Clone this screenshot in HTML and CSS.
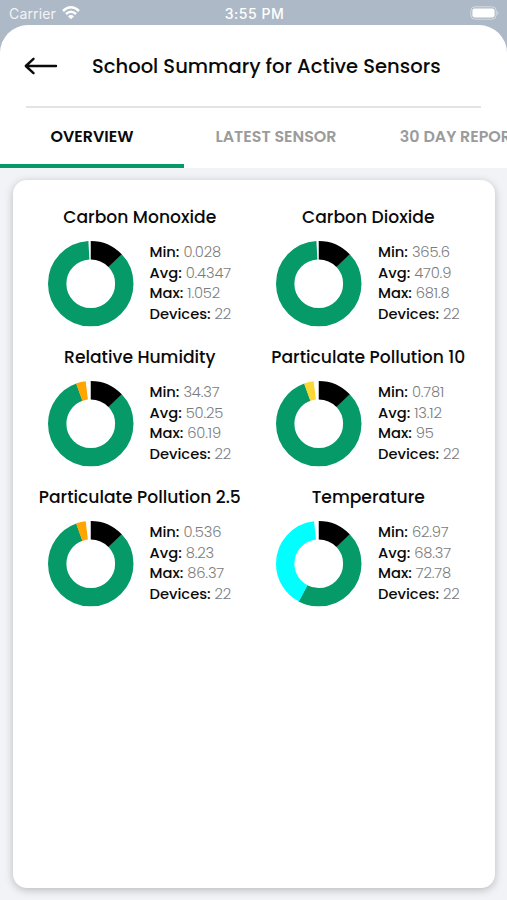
FILE: index.html
```html
<!DOCTYPE html>
<html lang="en">

<head>
    <meta charset="UTF-8">
    <meta name="viewport" content="width=device-width, initial-scale=1.0">
    <title>School Summary</title>
    <link rel="stylesheet" href="styles.css">
</head>

<body>
    <div class="status">
        <div class="carrier">
            <span>Carrier</span>
            <svg class="wifi" viewBox="0 0 18 14">
                <path d="M1 5 Q9 -2.4 17 5" />
                <path d="M3.9 8 Q9 3.4 14.1 8" />
                <path class="dot" d="M9 13.2 L5.9 10.2 Q9 7.6 12.1 10.2 Z" />
            </svg>
        </div>
        <div class="time">3:55 PM</div>
        <div class="power">
            <svg class="battery" viewBox="0 0 30 14">
                <rect class="shell" x="0.8" y="0.8" width="25.4" height="12.4" rx="4" />
                <rect class="level" x="2.4" y="2.4" width="22.2" height="9.2" rx="2.4" />
                <path class="cap" d="M27.4 4.8 Q29.6 7 27.4 9.2 Z" />
            </svg>
        </div>
    </div>
    <div class="sheet">
        <div class="header">
            <svg class="back" viewBox="0 0 34 20">
                <path d="M32 10 H2 M9.5 2.8 L1.8 10 L9.5 17.2" />
            </svg>
            <h1>School Summary for Active Sensors</h1>
        </div>
        <div class="tabs">
            <div class="tab active"><span>OVERVIEW</span></div>
            <div class="tab"><span>LATEST SENSOR</span></div>
            <div class="tab"><span>30 DAY REPORT</span></div>
        </div>
    </div>
    <div class="content">
        <div class="card">
            <div class="sensor">
                <h2>Carbon Monoxide</h2>
                <div class="row">
                    <svg class="donut" viewBox="0 0 86 86">
                        <circle class="green" pathLength="100" stroke-dasharray="86.3 100" stroke-dashoffset="-12.8" cx="43" cy="43" r="33.75" />
                        <circle class="black" pathLength="100" stroke-dasharray="12.9 100" cx="43" cy="43" r="33.75" />
                    </svg>
                    <ul>
                        <li><b>Min:</b> <span>0.028</span></li>
                        <li><b>Avg:</b> <span>0.4347</span></li>
                        <li><b>Max:</b> <span>1.052</span></li>
                        <li><b>Devices:</b> <span>22</span></li>
                    </ul>
                </div>
            </div>
            <div class="sensor">
                <h2>Carbon Dioxide</h2>
                <div class="row">
                    <svg class="donut" viewBox="0 0 86 86">
                        <circle class="green" pathLength="100" stroke-dasharray="86.3 100" stroke-dashoffset="-12.8" cx="43" cy="43" r="33.75" />
                        <circle class="black" pathLength="100" stroke-dasharray="12.9 100" cx="43" cy="43" r="33.75" />
                    </svg>
                    <ul>
                        <li><b>Min:</b> <span>365.6</span></li>
                        <li><b>Avg:</b> <span>470.9</span></li>
                        <li><b>Max:</b> <span>681.8</span></li>
                        <li><b>Devices:</b> <span>22</span></li>
                    </ul>
                </div>
            </div>
            <div class="sensor">
                <h2>Relative Humidity</h2>
                <div class="row">
                    <svg class="donut" viewBox="0 0 86 86">
                        <circle class="green" pathLength="100" stroke-dasharray="81.7 100" stroke-dashoffset="-12.8" cx="43" cy="43" r="33.75" />
                        <circle class="orange" pathLength="100" stroke-dasharray="3.7 100" stroke-dashoffset="-94.4" cx="43" cy="43" r="33.75" />
                        <circle class="black" pathLength="100" stroke-dasharray="12.9 100" cx="43" cy="43" r="33.75" />
                    </svg>
                    <ul>
                        <li><b>Min:</b> <span>34.37</span></li>
                        <li><b>Avg:</b> <span>50.25</span></li>
                        <li><b>Max:</b> <span>60.19</span></li>
                        <li><b>Devices:</b> <span>22</span></li>
                    </ul>
                </div>
            </div>
            <div class="sensor">
                <h2>Particulate Pollution 10</h2>
                <div class="row">
                    <svg class="donut" viewBox="0 0 86 86">
                        <circle class="green" pathLength="100" stroke-dasharray="81.7 100" stroke-dashoffset="-12.8" cx="43" cy="43" r="33.75" />
                        <circle class="yellow" pathLength="100" stroke-dasharray="3.7 100" stroke-dashoffset="-94.4" cx="43" cy="43" r="33.75" />
                        <circle class="black" pathLength="100" stroke-dasharray="12.9 100" cx="43" cy="43" r="33.75" />
                    </svg>
                    <ul>
                        <li><b>Min:</b> <span>0.781</span></li>
                        <li><b>Avg:</b> <span>13.12</span></li>
                        <li><b>Max:</b> <span>95</span></li>
                        <li><b>Devices:</b> <span>22</span></li>
                    </ul>
                </div>
            </div>
            <div class="sensor">
                <h2>Particulate Pollution 2.5</h2>
                <div class="row">
                    <svg class="donut" viewBox="0 0 86 86">
                        <circle class="green" pathLength="100" stroke-dasharray="81.7 100" stroke-dashoffset="-12.8" cx="43" cy="43" r="33.75" />
                        <circle class="orange" pathLength="100" stroke-dasharray="3.7 100" stroke-dashoffset="-94.4" cx="43" cy="43" r="33.75" />
                        <circle class="black" pathLength="100" stroke-dasharray="12.9 100" cx="43" cy="43" r="33.75" />
                    </svg>
                    <ul>
                        <li><b>Min:</b> <span>0.536</span></li>
                        <li><b>Avg:</b> <span>8.23</span></li>
                        <li><b>Max:</b> <span>86.37</span></li>
                        <li><b>Devices:</b> <span>22</span></li>
                    </ul>
                </div>
            </div>
            <div class="sensor">
                <h2>Temperature</h2>
                <div class="row">
                    <svg class="donut" viewBox="0 0 86 86">
                        <circle class="green" pathLength="100" stroke-dasharray="45 100" stroke-dashoffset="-12.8" cx="43" cy="43" r="33.75" />
                        <circle class="cyan" pathLength="100" stroke-dasharray="40.5 100" stroke-dashoffset="-57.7" cx="43" cy="43" r="33.75" />
                        <circle class="black" pathLength="100" stroke-dasharray="12.9 100" cx="43" cy="43" r="33.75" />
                    </svg>
                    <ul>
                        <li><b>Min:</b> <span>62.97</span></li>
                        <li><b>Avg:</b> <span>68.37</span></li>
                        <li><b>Max:</b> <span>72.78</span></li>
                        <li><b>Devices:</b> <span>22</span></li>
                    </ul>
                </div>
            </div>
        </div>
    </div>
</body>

</html>
```
FILE: styles.css
```css
* {
    margin: 0;
    padding: 0;
    box-sizing: border-box;
}

body {
    width: 100%;
    height: 100vh;
    display: flex;
    flex-direction: column;
    overflow: hidden;
    background: linear-gradient(#adb9c7 0, #adb9c7 80px, #f2f3f7 80px);
    font-family: Poppins, Inter, sans-serif;
    color: #0a0a0a;
}

/* status bar */
.status {
    height: 25px;
    padding: 1px 7px 0 9px;
    display: flex;
    align-items: center;
    color: white;
    font-family: Inter, sans-serif;
    font-size: 14px;
}

.carrier,
.power {
    flex: 1;
    display: flex;
    align-items: center;
    gap: 6px;
}

.carrier span {
    letter-spacing: 0.15px;
    opacity: 0.85;
}

.power {
    justify-content: flex-end;
}

.time {
    font-weight: 500;
    letter-spacing: 0.5px;
}

.wifi {
    width: 18px;
    height: 14px;
    fill: none;
    stroke: white;
    stroke-width: 2.4;
}

.wifi .dot {
    fill: white;
    stroke: none;
}

.battery {
    width: 30px;
    height: 14px;
}

.shell {
    fill: none;
    stroke: #d3dae2;
}

.level {
    fill: white;
}

.cap {
    fill: #d3dae2;
}

/* header + tabs */
.sheet {
    height: 143px;
    background-color: white;
    border-radius: 28px 28px 0 0;
}

.header {
    height: 83px;
    margin: 0 26px;
    border-bottom: 2px solid #e3e3e3;
    display: flex;
    align-items: center;
}

.back {
    width: 34px;
    height: 20px;
    margin-left: -2px;
    fill: none;
    stroke: #0a0a0a;
    stroke-width: 2.4;
    stroke-linecap: round;
    stroke-linejoin: round;
}

.header h1 {
    margin-left: 34px;
    font-size: 19.55px;
    font-weight: 500;
    white-space: nowrap;
}

.tabs {
    height: 60px;
    display: flex;
    overflow: hidden;
}

.tab {
    width: 184px;
    flex-shrink: 0;
    display: flex;
    align-items: center;
    justify-content: center;
    border-bottom: 4px solid transparent;
    font-size: 15.9px;
    font-weight: 600;
    color: #9b9b9b;
    white-space: nowrap;
}

.tab.active {
    border-color: #069a69;
    color: #0a0a0a;
}

/* card */
.content {
    flex: 1;
    padding: 12px 12px 12px 13px;
    background-color: #f2f3f7;
}

.card {
    height: 708px;
    padding: 20px 12.5px;
    display: grid;
    grid-template-columns: 228.5px 228.5px;
    grid-auto-rows: 140px;
    border-radius: 14px;
    background-color: white;
    box-shadow: 0 2px 8px rgba(0, 0, 0, 0.24);
}

.sensor h2 {
    height: 34px;
    line-height: 34px;
    font-size: 17.15px;
    font-weight: 500;
    text-align: center;
    white-space: nowrap;
}

.row {
    display: flex;
    align-items: center;
    margin-top: 7px;
    padding-left: 22px;
}

.donut {
    width: 85.5px;
    height: 85.5px;
    transform: rotate(-90deg);
    fill: none;
    stroke-width: 18.5;
}

.green {
    stroke: #069a69;
}

.black {
    stroke: #000;
}

.orange {
    stroke: #ffa500;
}

.yellow {
    stroke: #fdd835;
}

.cyan {
    stroke: #00ffff;
}

.row ul {
    margin-top: -1px;
    margin-left: 16.5px;
    list-style: none;
    font-size: 14.7px;
    line-height: 20.7px;
    white-space: nowrap;
}

.row b {
    font-weight: 500;
}

.row span {
    font-weight: 300;
    letter-spacing: -0.15px;
    color: #7c7c7c;
}
```
